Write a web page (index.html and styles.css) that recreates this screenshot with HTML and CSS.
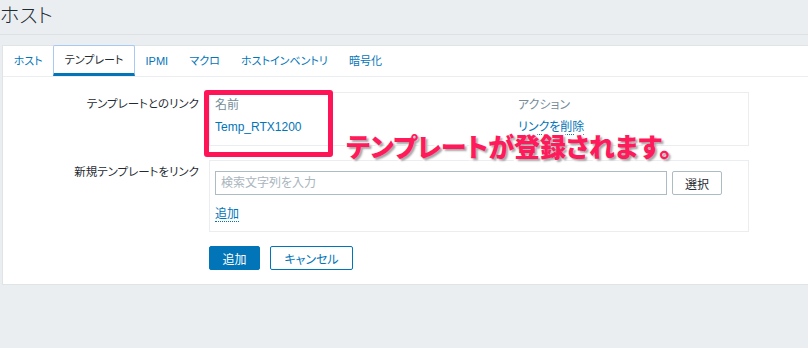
FILE: index.html
```html
<!DOCTYPE html>
<html lang="ja">
<head>
<meta charset="utf-8">
<title>ホスト</title>
<link rel="stylesheet" href="styles.css">
</head>
<body>
<header class="page-header"><h1 class="page-title">ホスト</h1></header>
<main class="panel">
  <nav class="tabs">
    <a class="tab">ホスト</a>
    <a class="tab tab-active">テンプレート</a>
    <a class="tab">IPMI</a>
    <a class="tab">マクロ</a>
    <a class="tab">ホストインベントリ</a>
    <a class="tab">暗号化</a>
  </nav>
  <div class="form">
    <div class="form-label">テンプレートとのリンク</div>
    <div class="field box box-linked">
      <div class="grid-row grid-head">
        <span class="col-name">名前</span>
        <span class="col-action">アクション</span>
      </div>
      <div class="grid-row grid-item">
        <span class="col-name"><a class="link-plain">Temp_RTX1200</a></span>
        <span class="col-action"><a class="link-dotted">リンクを削除</a></span>
      </div>
    </div>

    <div class="form-label">新規テンプレートをリンク</div>
    <div class="field box box-new">
      <div class="search-line">
        <input class="search-input" type="text" placeholder="検索文字列を入力">
        <button class="btn-select" type="button">選択</button>
      </div>
      <a class="link-dotted add-link">追加</a>
    </div>

    <div class="form-label"></div>
    <div class="field actions">
      <button class="btn-primary" type="button">追加</button>
      <button class="btn-alt" type="button">キャンセル</button>
    </div>
  </div>
</main>
<div class="annot-rect"></div>
<div class="annot-text">テンプレートが登録されます。</div>
</body>
</html>
```
FILE: styles.css
```css
* { box-sizing: border-box; }
html, body { margin: 0; padding: 0; }
body {
  background: #ebeef0;
  width: 808px;
  height: 348px;
  overflow: hidden;
  position: relative;
  font-family: "Liberation Sans", "Noto Sans CJK JP", sans-serif;
  font-size: 12px;
  font-feature-settings: "palt";
  color: #1f2c33;
}
.page-header {
  height: 35px;
  border-bottom: 1px solid #dde1e4;
  margin-bottom: 10px;
}
.page-title {
  margin: 0;
  padding-top: 3px;
  font-size: 20px;
  font-weight: 300;
  line-height: 26px;
  color: #1f2c33;
}
.panel {
  margin-left: 2px;
  background: #fff;
  border: 1px solid #dfe4e7;
  border-right: none;
  height: 240px;
}
.tabs {
  display: flex;
  height: 31px;
  border-bottom: 1px solid #ebeef0;
  padding-left: 0;
  font-size: 11px;
}
.tab {
  display: flex;
  align-items: center;
  padding: 0 10.6px;
  height: 30px;
  color: #0275b8;
  text-decoration: none;
  line-height: 14px;
}
.tab-active {
  color: #1f2c33;
  border: 1px solid #a8c9f3;
  border-bottom: 3px solid #0275b8;
  border-radius: 2px 2px 0 0;
  height: 31px;
  margin-top: -1px;
  padding: 0 10.6px;
}
.form {
  display: grid;
  grid-template-columns: 196px 540px;
  column-gap: 10px;
  row-gap: 14px;
  padding-top: 15px;
}
.form-label {
  text-align: right;
  padding-top: 5px;
  line-height: 14px;
  font-size: 11.5px;
}
.box {
  border: 1px solid #ebeef0;
}
.box-linked {
  height: 54px;
  padding: 0 5px;
}
.grid-row {
  display: flex;
  line-height: 14px;
}
.grid-head {
  height: 22px;
  padding-top: 5px;
  color: #768d99;
}
.grid-item {
  height: 23px;
  padding-top: 5px;
}
.col-name { width: 303px; }
.col-action { flex: 1; }
.link-plain { color: #0275b8; text-decoration: none; }
.link-dotted {
  color: #0275b8;
  text-decoration: none;
  border-bottom: 1px dotted #0275b8;
}
.box-new {
  height: 72px;
  padding: 10px 5px 0;
}
.search-line {
  display: flex;
  gap: 5px;
}
.search-input {
  width: 452px;
  height: 24px;
  border: 1px solid #acbbc4;
  padding: 0 5px;
  font: inherit;
  font-size: 12px;
  color: #1f2c33;
  outline: none;
}
.search-input::placeholder { color: #a9b5bc; }
.btn-select {
  width: 50px;
  height: 24px;
  border: 1px solid #acbbc4;
  border-radius: 2px;
  background: #fff;
  color: #1f2c33;
  font: inherit;
  font-size: 12px;
  padding: 0;
}
.add-link {
  display: inline-block;
  margin-top: 12px;
  line-height: 14px;
}
.actions {
  display: flex;
  gap: 10px;
}
.btn-primary, .btn-alt {
  height: 24px;
  border-radius: 2px;
  font: inherit;
  font-size: 12px;
  padding: 0;
}
.btn-primary {
  width: 51px;
  background: #0275b8;
  border: 1px solid #0275b8;
  color: #fff;
}
.btn-alt {
  width: 83px;
  background: #fff;
  border: 1px solid #0275b8;
  color: #0275b8;
}
.annot-rect {
  position: absolute;
  left: 204px;
  top: 90px;
  width: 129px;
  height: 67px;
  border: 5px solid #ff1458;
  border-radius: 3px;
}
.annot-text {
  position: absolute;
  left: 346px;
  top: 129px;
  font-family: "Noto Sans CJK JP", sans-serif;
  font-size: 26px;
  font-weight: 900;
  line-height: 34px;
  color: #ff1a5c;
  -webkit-text-stroke: 4px #fff;
  paint-order: stroke fill;
  text-shadow: 2px 2px 2px rgba(0, 0, 0, 0.35);
  white-space: nowrap;
}
```
